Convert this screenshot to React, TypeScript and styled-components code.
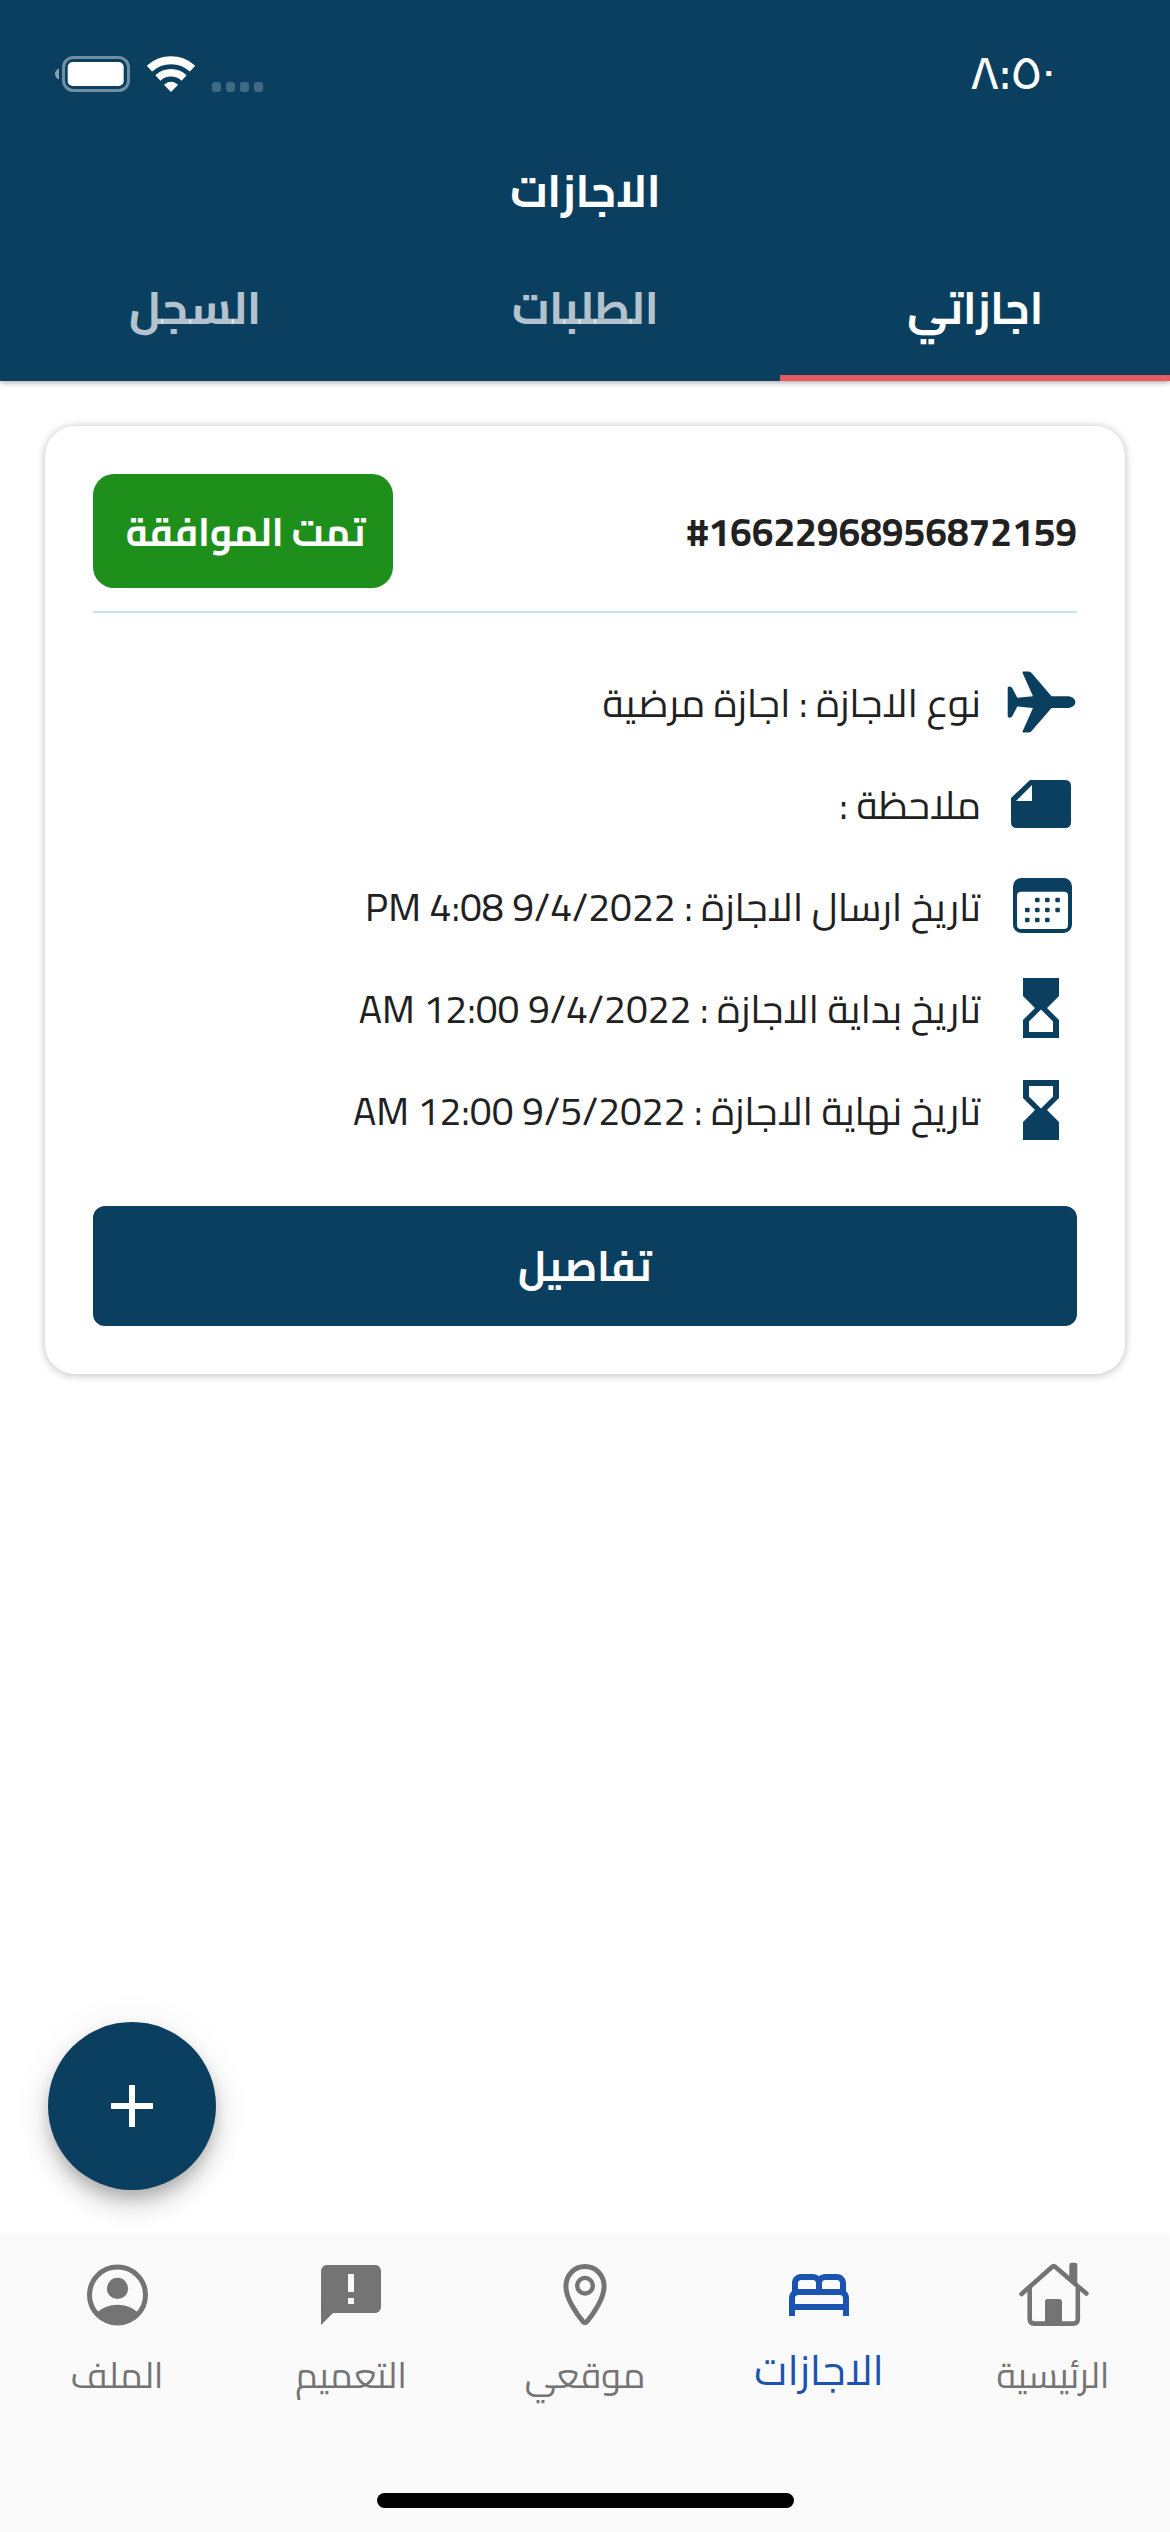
import React from "react";
import styled, { createGlobalStyle } from "styled-components";

const navy = "#0b3f60";
const ink = "#212121";
const grey = "#747474";
const blue = "#1a54b0";

const GlobalStyle = createGlobalStyle`
  html, body { margin: 0; padding: 0; background: #fff; }
  * { box-sizing: border-box; }
`;

const Screen = styled.div`
  width: 1170px;
  height: 2532px;
  display: flex;
  flex-direction: column;
  overflow: hidden;
  background: #fff;
  color: ${ink};
  font-family: Cairo, "Noto Sans Arabic", "DejaVu Sans", sans-serif;
`;

const Header = styled.header`
  flex: none;
  height: 381px;
  background: ${navy};
  color: #fff;
  box-shadow: 0 1px 6px rgba(0, 0, 0, 0.4);
  z-index: 1;
`;

const StatusBar = styled.div`
  height: 141px;
  padding: 6px 115px 0 55px;
  display: flex;
  align-items: center;
  justify-content: space-between;
  direction: ltr;
`;

const StatusIcons = styled.div`
  display: flex;
  align-items: flex-end;
`;

const WifiIcon = styled.svg`
  margin-left: 17px;
  display: block;
`;

const Signal = styled.div`
  display: flex;
  gap: 5px;
  margin-left: 17px;
`;

const SignalDot = styled.i`
  width: 9px;
  height: 10px;
  border-radius: 3px;
  background: rgba(255, 255, 255, 0.22);
`;

const Clock = styled.time`
  font-size: 47px;
  font-weight: 600;
  line-height: 60px;
  padding-bottom: 3px;
`;

const BoldLabel = styled.span<{ $stretch: number }>`
  display: inline-block;
  transform: scaleX(${(p) => p.$stretch});
`;

const Title = styled.h1`
  margin: 0;
  height: 96px;
  padding-top: 3px;
  font-size: 45px;
  font-weight: 700;
  line-height: 93px;
  text-align: center;
`;

const Tabs = styled.nav`
  display: grid;
  grid-template-columns: repeat(3, 1fr);
`;

const Tab = styled.div<{ $active?: boolean }>`
  height: 144px;
  padding-top: 3px;
  border-bottom: 6px solid ${(p) => (p.$active ? "#ea5863" : "transparent")};
  color: ${(p) => (p.$active ? "#fff" : "rgba(255, 255, 255, 0.7)")};
  font-size: 45px;
  font-weight: 700;
  line-height: 135px;
  text-align: center;
`;

const Main = styled.main`
  flex: 1;
  position: relative;
  padding: 45px;
`;

const Card = styled.article`
  height: 948px;
  padding: 48px;
  border-radius: 30px;
  background: #fff;
  box-shadow: 0 3px 10px rgba(0, 0, 0, 0.09), 0 0 8px rgba(0, 0, 0, 0.19);
`;

const CardHead = styled.div`
  display: flex;
  align-items: center;
  justify-content: space-between;
  padding-bottom: 23px;
  border-bottom: 2px solid #c9dfeb;
`;

const RequestId = styled.div`
  direction: ltr;
  font-size: 39px;
  font-weight: 700;
  line-height: 73px;
`;

const Badge = styled.div`
  width: 300px;
  height: 114px;
  padding-left: 5px;
  border-radius: 21px;
  background: #1f8f1c;
  color: #fff;
  font-size: 39px;
  font-weight: 700;
  line-height: 115px;
  text-align: center;
`;

const Details = styled.ul`
  list-style: none;
  margin: 38px 0 0;
  padding: 0;
`;

const Detail = styled.li`
  height: 102px;
  display: flex;
  align-items: center;
  gap: 24px;
  font-size: 39px;
  line-height: 73px;
  white-space: nowrap;
`;

const Icon = styled.svg`
  flex: none;
  display: block;
  width: 72px;
  height: 72px;
  overflow: visible;
  fill: currentColor;
`;

const DetailIcon = styled(Icon)`
  color: ${navy};
`;

const DetailsButton = styled.button`
  display: block;
  width: 100%;
  height: 120px;
  margin-top: 45px;
  padding: 0;
  border: 0;
  border-radius: 12px;
  background: ${navy};
  color: #fff;
  font-family: inherit;
  font-size: 42px;
  font-weight: 700;
  line-height: 120px;
`;

const AddButton = styled.button`
  position: absolute;
  left: 48px;
  bottom: 45px;
  width: 168px;
  height: 168px;
  padding: 0;
  border: 0;
  border-radius: 50%;
  background: ${navy};
  color: #fff;
  display: grid;
  place-items: center;
  box-shadow: 0 9px 15px -3px rgba(0, 0, 0, 0.2), 0 16px 26px rgba(0, 0, 0, 0.14),
    0 3px 40px rgba(0, 0, 0, 0.07);
`;

const BottomBar = styled.footer`
  flex: none;
  height: 297px;
  display: flex;
  flex-direction: column;
  align-items: center;
  justify-content: space-between;
  padding-bottom: 24px;
  background: #fafafa;
  box-shadow: 0 0 4px rgba(0, 0, 0, 0.06);
`;

const NavItems = styled.nav`
  width: 100%;
  height: 174px;
  display: grid;
  grid-template-columns: repeat(5, 1fr);
`;

const NavItem = styled.div<{ $active?: boolean }>`
  display: flex;
  flex-direction: column;
  align-items: center;
  justify-content: space-between;
  padding-top: 24px;
  color: ${(p) => (p.$active ? blue : grey)};
  font-size: ${(p) => (p.$active ? 42 : 36)}px;
  line-height: ${(p) => (p.$active ? 78 : 68)}px;
  white-space: nowrap;
`;

const HomeIndicator = styled.div`
  width: 417px;
  height: 15px;
  border-radius: 8px;
  background: #000;
`;

const hourglassTop =
  "M6 2v6h.01L6 8.01 10 12l-4 4 .01.01H6V22h12v-5.99h-.01L18 16l-4-4 4-3.99-.01-.01H18V2H6zm10 14.5V20H8v-3.5l4-4 4 4z";
const hourglassBottom =
  "M18 22l-.01-6L14 12l3.99-4.01L18 2H6v6l4 4-4 3.99V22h12zM8 7.5V4h8v3.5l-4 4-4-4z";

const calendarDots = [
  [32.3, 30], [42.3, 30], [52.6, 30],
  [22.3, 40], [32.3, 40], [42.3, 40], [52.6, 40],
  [22.3, 50], [32.3, 50], [42.3, 50],
];

const details = [
  {
    text: "نوع الاجازة : اجازة مرضية",
    icon: (
      <DetailIcon viewBox="0 0 72 72">
        <path d="M64 30.2H46.5L26.6 7Q25.3 5.5 23.5 5.5H18.4Q17.1 5.5 17.6 6.9L28 30.2L12.3 31.7L7.4 22.3Q6.4 20.5 4.6 20.5Q2.7 20.5 2.7 21.6V50.6Q2.7 51.7 4.6 51.7Q6.4 51.7 7.4 49.9L12.3 40.4L28 42L17.6 65.2Q17.1 66.6 18.4 66.6H23.5Q25.3 66.6 26.6 65.1L46.5 42H64Q70.4 40.4 70.4 36.1Q70.4 31.8 64 30.2Z" />
      </DetailIcon>
    ),
  },
  {
    text: "ملاحظة :",
    icon: (
      <DetailIcon viewBox="0 0 72 72">
        <path
          fillRule="evenodd"
          d="M25 12H60Q66 12 66 18V54Q66 60 60 60H12Q6 60 6 54V30ZM27 17L11 33H27Z"
        />
      </DetailIcon>
    ),
  },
  {
    text: "تاريخ ارسال الاجازة : 9/4/2022 4:08 PM",
    icon: (
      <DetailIcon viewBox="0 0 72 72">
        <rect x="8" y="8" width="59" height="55" rx="8.5" />
        <rect x="12" y="21.7" width="51" height="37.3" rx="4" fill="#fff" />
        {calendarDots.map(([x, y]) => (
          <rect key={`${x}-${y}`} x={x - 2.3} y={y - 2.3} width="4.6" height="4.6" rx="1.2" />
        ))}
      </DetailIcon>
    ),
  },
  {
    text: "تاريخ بداية الاجازة : 9/4/2022 12:00 AM",
    icon: (
      <DetailIcon viewBox="0 0 24 24">
        <path d={hourglassTop} />
      </DetailIcon>
    ),
  },
  {
    text: "تاريخ نهاية الاجازة : 9/5/2022 12:00 AM",
    icon: (
      <DetailIcon viewBox="0 0 24 24">
        <path d={hourglassBottom} />
      </DetailIcon>
    ),
  },
];

const navItems = [
  {
    label: "الرئيسية",
    icon: (
      <Icon viewBox="0 0 72 72">
        <path
          d="M4.6 35L35 8Q36.7 6.4 38.4 8L69.4 34.6M12.7 29V60Q12.7 64.6 17.3 64.6H56.2Q60.8 64.6 60.8 60V29"
          fill="none"
          stroke="currentColor"
          strokeWidth="4.6"
          strokeLinecap="round"
          strokeLinejoin="round"
        />
        <path d="M52.3 20V6Q52.3 3.8 54.5 3.8H58Q60.3 3.8 60.3 6V28Z" />
        <path d="M28 64V42.5Q28 40 30.5 40H42.6Q45 40 45 42.5V64Z" />
      </Icon>
    ),
  },
  {
    label: "الاجازات",
    active: true,
    icon: (
      <Icon viewBox="0 0 24 24">
        <path d="M21 10.78V8c0-1.65-1.35-3-3-3h-4c-.77 0-1.47.3-2 .78C11.47 5.3 10.77 5 10 5H6C4.35 5 3 6.35 3 8v2.78C2.39 11.33 2 12.12 2 13v6h2v-2h16v2h2v-6c0-.88-.39-1.67-1-2.22zM14 7h4c.55 0 1 .45 1 1v2h-6V8c0-.55.45-1 1-1zM5 8c0-.55.45-1 1-1h4c.55 0 1 .45 1 1v2H5V8zm-1 7v-2c0-.55.45-1 1-1h14c.55 0 1 .45 1 1v2H4z" />
      </Icon>
    ),
  },
  {
    label: "موقعي",
    icon: (
      <Icon viewBox="0 0 72 72">
        <g fill="none" stroke="currentColor">
          <path
            strokeWidth="5"
            d="M36 7.5C25.2 7.5 16.9 16 16.9 27.5C16.9 39.5 27.9 55.5 34.3 62.8Q36 64.6 37.7 62.8C44.1 55.5 55.1 39.5 55.1 27.5C55.1 16 46.8 7.5 36 7.5Z"
          />
          <circle cx="36" cy="26.7" r="7.8" strokeWidth="4.4" />
        </g>
      </Icon>
    ),
  },
  {
    label: "التعميم",
    icon: (
      <Icon viewBox="0 0 24 24">
        <path d="M20 2H4c-1.1 0-1.99.9-1.99 2L2 22l4-4h14c1.1 0 2-.9 2-2V4c0-1.1-.9-2-2-2zm-7 9h-2V5h2v6zm0 4h-2v-2h2v2z" />
      </Icon>
    ),
  },
  {
    label: "الملف",
    icon: (
      <Icon viewBox="0 0 72 72">
        <circle cx="36.5" cy="36" r="28" fill="none" stroke="currentColor" strokeWidth="5" />
        <circle cx="36.5" cy="29.4" r="10.6" />
        <path d="M16 53.5Q24.5 45.8 36.5 45.8Q48.5 45.8 57 53.5Q49 64.5 36.5 64.5Q24 64.5 16 53.5Z" />
      </Icon>
    ),
  },
];

const tabs = [
  { label: "اجازاتي", stretch: 0.955, active: true },
  { label: "الطلبات", stretch: 0.985 },
  { label: "السجل", stretch: 1 },
];

export default function App() {
  return (
    <>
      <GlobalStyle />
      <Screen dir="rtl">
        <Header>
          <StatusBar>
            <StatusIcons>
              <svg width="75" height="36" viewBox="0 0 75 36">
                <path d="M4 12.5Q0 14 0 18Q0 22 4 23.5Z" fill="#fff" fillOpacity="0.5" />
                <rect x="8.5" y="1.5" width="65" height="33" rx="10" fill="none" stroke="#fff" strokeOpacity="0.42" strokeWidth="3" />
                <rect x="12.7" y="6" width="56" height="24" rx="5" fill="#fff" />
              </svg>
              <WifiIcon width="48" height="36" viewBox="0 0 48 36">
                <g fill="none" stroke="#fff">
                  <path d="M2.4 12.6A32 32 0 0 1 45.6 12.6" strokeWidth="8" />
                  <path d="M10.9 22A19.2 19.2 0 0 1 37.1 22" strokeWidth="7.5" />
                </g>
                <path d="M24 35.5L17.5 28.8A9.6 9.6 0 0 1 30.5 28.8Z" fill="#fff" stroke="#fff" strokeWidth="1" strokeLinejoin="round" />
              </WifiIcon>
              <Signal>
                <SignalDot />
                <SignalDot />
                <SignalDot />
                <SignalDot />
              </Signal>
            </StatusIcons>
            <Clock>٨:٥٠</Clock>
          </StatusBar>
          <Title>
            <BoldLabel $stretch={0.985}>الاجازات</BoldLabel>
          </Title>
          <Tabs>
            {tabs.map((tab) => (
              <Tab key={tab.label} $active={tab.active}>
                <BoldLabel $stretch={tab.stretch}>{tab.label}</BoldLabel>
              </Tab>
            ))}
          </Tabs>
        </Header>
        <Main>
          <Card>
            <CardHead>
              <RequestId>#16622968956872159</RequestId>
              <Badge>
                <BoldLabel $stretch={0.97}>تمت الموافقة</BoldLabel>
              </Badge>
            </CardHead>
            <Details>
              {details.map((item) => (
                <Detail key={item.text}>
                  {item.icon}
                  <span>{item.text}</span>
                </Detail>
              ))}
            </Details>
            <DetailsButton>
              <BoldLabel $stretch={0.945}>تفاصيل</BoldLabel>
            </DetailsButton>
          </Card>
          <AddButton aria-label="+">
            <svg width="42" height="42" viewBox="0 0 42 42">
              <path d="M21 0V42M0 21H42" stroke="#fff" strokeWidth="6" />
            </svg>
          </AddButton>
        </Main>
        <BottomBar>
          <NavItems>
            {navItems.map((item) => (
              <NavItem key={item.label} $active={item.active}>
                {item.icon}
                <span>{item.label}</span>
              </NavItem>
            ))}
          </NavItems>
          <HomeIndicator />
        </BottomBar>
      </Screen>
    </>
  );
}
